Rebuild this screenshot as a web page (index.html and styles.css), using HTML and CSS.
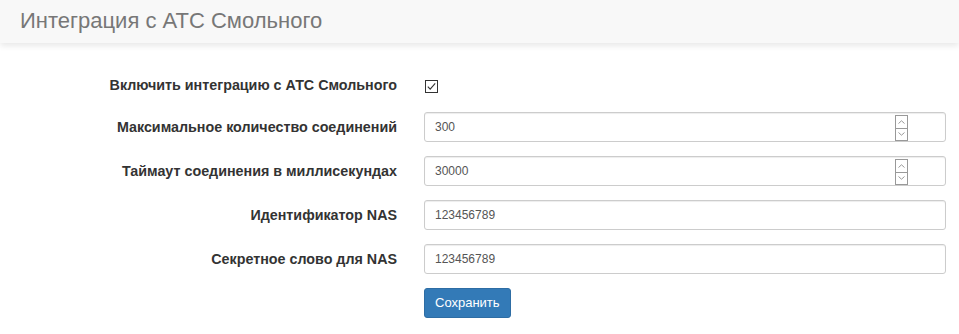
FILE: index.html
```html
<!DOCTYPE html>
<html lang="ru">
<head>
<meta charset="utf-8">
<title>Интеграция с АТС Смольного</title>
<link rel="stylesheet" href="styles.css">
</head>
<body>
<header class="page-header">
  <h1 class="page-title">Интеграция с АТС Смольного</h1>
</header>
<form class="form">
  <label class="label label-check">Включить интеграцию с АТС Смольного</label>
  <div class="control control-check">
    <span class="checkbox">
      <svg width="13" height="13" viewBox="0 0 13 13"><rect x="0.5" y="0.5" width="12" height="12" fill="#fff" stroke="#333" stroke-width="1"/><path d="M2.8 6.6 L5.2 9.2 L10.2 3.4" fill="none" stroke="#333" stroke-width="1.1"/></svg>
    </span>
  </div>

  <label class="label">Максимальное количество соединений</label>
  <div class="control">
    <div class="input">300</div>
    <span class="spinner"><span class="spin-up"><svg width="7" height="4" viewBox="0 0 7 4"><path d="M0.5 3.5 L3.5 0.8 L6.5 3.5" fill="none" stroke="#999" stroke-width="1"/></svg></span><span class="spin-down"><svg width="7" height="4" viewBox="0 0 7 4"><path d="M0.5 0.5 L3.5 3.2 L6.5 0.5" fill="none" stroke="#999" stroke-width="1"/></svg></span></span>
  </div>

  <label class="label">Таймаут соединения в миллисекундах</label>
  <div class="control">
    <div class="input">30000</div>
    <span class="spinner"><span class="spin-up"><svg width="7" height="4" viewBox="0 0 7 4"><path d="M0.5 3.5 L3.5 0.8 L6.5 3.5" fill="none" stroke="#999" stroke-width="1"/></svg></span><span class="spin-down"><svg width="7" height="4" viewBox="0 0 7 4"><path d="M0.5 0.5 L3.5 3.2 L6.5 0.5" fill="none" stroke="#999" stroke-width="1"/></svg></span></span>
  </div>

  <label class="label">Идентификатор NAS</label>
  <div class="control">
    <div class="input">123456789</div>
  </div>

  <label class="label">Секретное слово для NAS</label>
  <div class="control">
    <div class="input">123456789</div>
  </div>

  <div class="label"></div>
  <div class="control control-btn">
    <button type="button" class="btn">Сохранить</button>
  </div>
</form>
</body>
</html>
```

FILE: styles.css
```css
* { box-sizing: border-box; }
html, body { margin: 0; padding: 0; background: #fff; }
body {
  font-family: "Liberation Sans", Arial, sans-serif;
  color: #333;
  width: 959px;
  height: 334px;
  overflow: hidden;
}
.page-header {
  height: 43px;
  background: #f8f8f8;
  box-shadow: 0 3px 6px rgba(0,0,0,0.09);
  padding-left: 20px;
  display: flex;
  align-items: center;
}
.page-title {
  margin: 0;
  font-size: 22px;
  font-weight: normal;
  color: #777;
  line-height: 1;
  position: relative;
  top: -1px;
}
.form {
  display: grid;
  grid-template-columns: 397px 1fr;
  column-gap: 27px;
  row-gap: 14px;
  padding: 30px 13px 0 0;
}
.label {
  font-size: 14.3px;
  font-weight: bold;
  text-align: right;
  align-self: center;
  color: #333;
}
.label-check, .control-check { height: 25px; line-height: 25px; }
.control { position: relative; }
.control-check { display: flex; align-items: center; }
.checkbox { display: block; width: 13px; height: 13px; margin-left: 1px; margin-top: 1px; }
.checkbox svg { display: block; }
.input {
  height: 30px;
  border: 1px solid #ccc;
  border-radius: 3px;
  padding: 0 10px;
  font-size: 12px;
  line-height: 28px;
  color: #555;
  background: #fff;
  box-shadow: inset 0 1px 1px rgba(0,0,0,0.075);
}
.spinner {
  position: absolute;
  right: 38px;
  top: 3px;
  width: 13px;
  height: 26px;
  border: 1px solid #999;
  display: flex;
  flex-direction: column;
  background: #fff;
}
.spin-up, .spin-down {
  flex: 1;
  display: flex;
  align-items: center;
  justify-content: center;
}
.spin-up { border-bottom: 1px solid #999; }
.spin-up svg, .spin-down svg { display: block; }
.btn {
  font-family: "Liberation Sans", Arial, sans-serif;
  font-size: 13px;
  line-height: 18px;
  height: 30px;
  padding: 5px 10px;
  color: #fff;
  background: #337ab7;
  border: 1px solid #2e6da4;
  border-radius: 3px;
  cursor: pointer;
}
```
